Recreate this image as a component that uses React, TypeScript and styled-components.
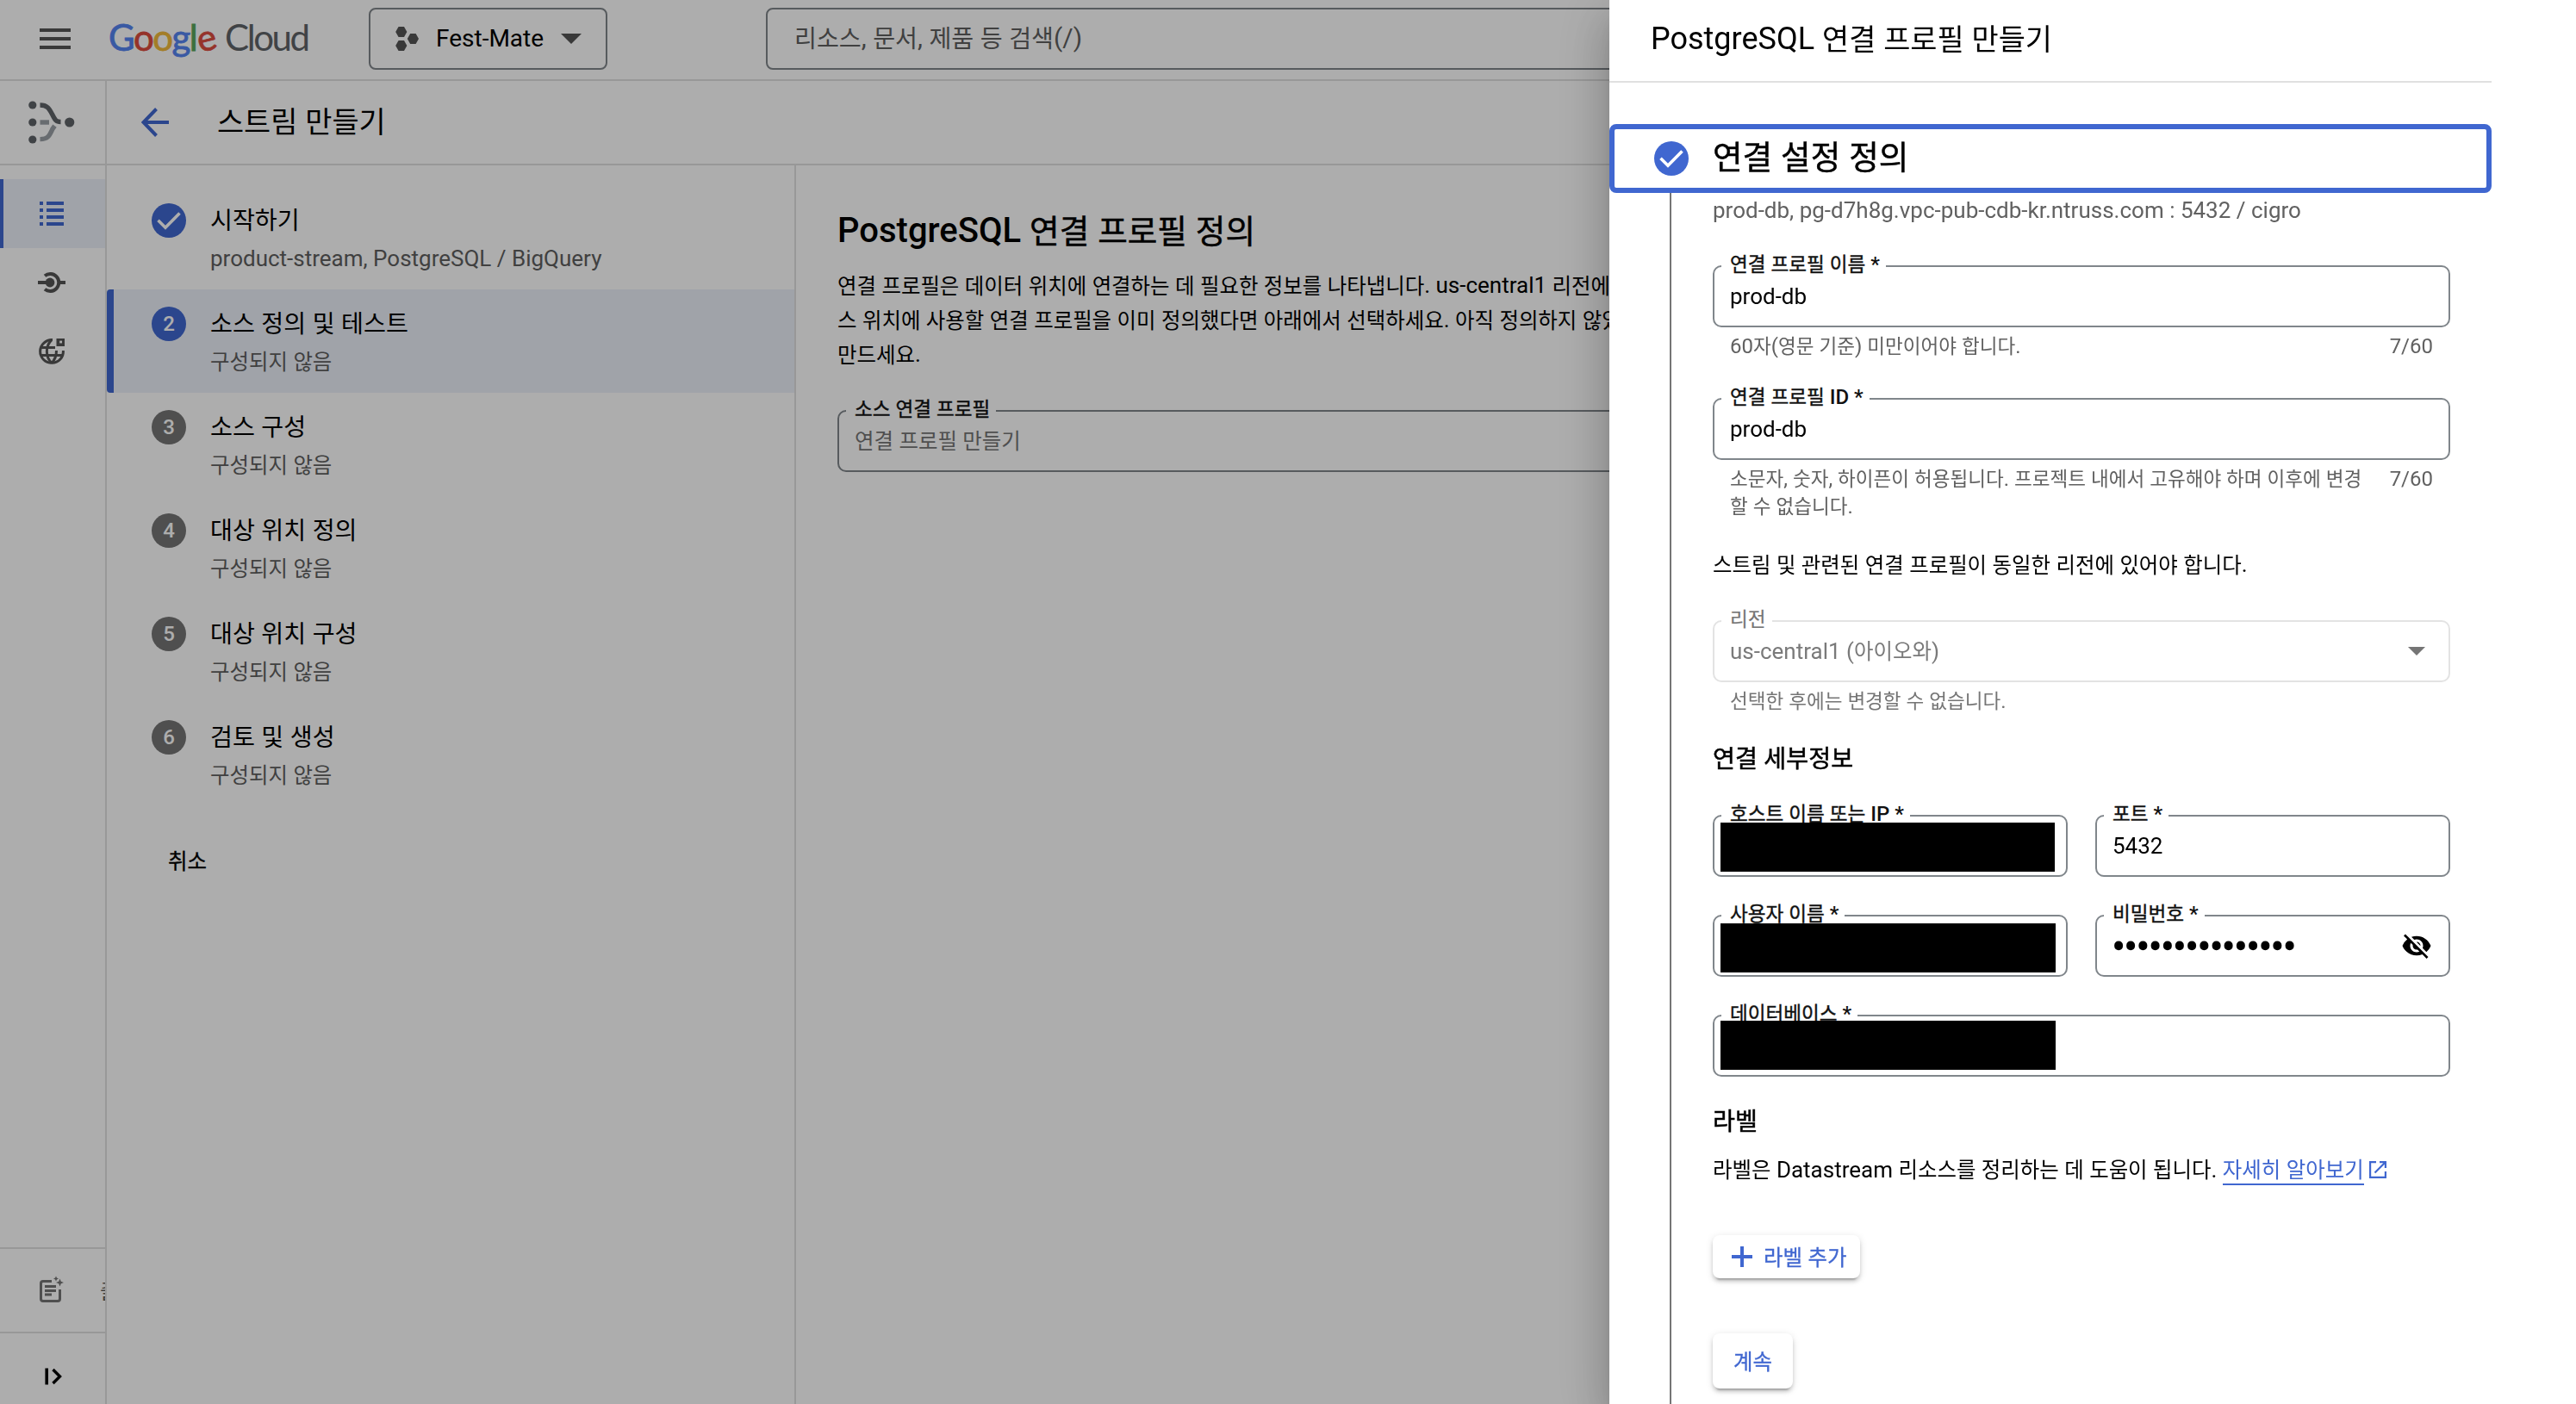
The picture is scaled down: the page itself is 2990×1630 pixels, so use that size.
import React from "react";
import styled, { createGlobalStyle } from "styled-components";
import { MdVisibilityOff } from "react-icons/md";

const BLUE = "#4067d0";
const LINE = "#e0e0e0";
const OUTLINE = "#80868b";

const GlobalStyle = createGlobalStyle`
  * { box-sizing: border-box; }
  html, body { margin: 0; padding: 0; background: #fff; overflow: hidden; }
  body {
    font-family: Roboto, "Noto Sans CJK KR", sans-serif;
    font-size: 26px;
    color: #000;
  }
  svg { display: block; flex: none; }
  h1, h2, h3, p { margin: 0; }
`;

/* Hangul is set a little smaller than the Latin text beside it; emphasised
   parents thicken it with --hangul-stroke instead of a heavier face. */
const Hangul = styled.span`
  font-size: 0.94em;
  font-weight: 400;
  line-height: 0;
  vertical-align: var(--hangul-drop, -0.03em);
  -webkit-text-stroke: var(--hangul-stroke, 0);
`;

function T({ children }: { children: string }) {
  return (
    <>
      {children.split(/([\uAC00-\uD7A3]+)/).map((part, i) =>
        i % 2 ? <Hangul key={i}>{part}</Hangul> : part
      )}
    </>
  );
}

/* ---------- shell ---------- */

const Page = styled.div`
  width: 2990px;
  height: 1630px;
  display: flex;
  flex-direction: column;
  overflow: hidden;
`;

const TopBar = styled.header`
  height: 94px;
  flex: none;
  display: flex;
  align-items: flex-start;
  border-bottom: 2px solid ${LINE};
`;

const MenuButton = styled.div`
  padding: 33px 0 0 46px;
  width: 126px;
  display: flex;
  flex-direction: column;
  gap: 6px;
`;

const MenuBar = styled.span`
  width: 36px;
  height: 4px;
  background: #555;
`;

const Logo = styled.div`
  width: 302px;
  padding-top: 17px;
  font: 400 42px/52px Lato, sans-serif;
  white-space: nowrap;
  display: flex;
  gap: 9px;
`;

const LogoWord = styled.span<{ $width: number; $spacing: number }>`
  width: ${(p) => p.$width}px;
  letter-spacing: ${(p) => p.$spacing}px;
  color: #5f6368;
`;

const Letter = styled.span<{ $color: string; $tilt?: boolean }>`
  display: inline-block;
  color: ${(p) => p.$color};
  -webkit-text-stroke: 0.8px ${(p) => p.$color};
  transform: ${(p) => (p.$tilt ? "rotate(-14deg)" : "none")};
`;

const ProjectPicker = styled.div`
  margin-top: 9px;
  width: 277px;
  height: 72px;
  border: 2px solid ${OUTLINE};
  border-radius: 8px;
  display: flex;
  align-items: center;
  padding: 0 28px 0 29px;
  font-size: 28px;
`;

const ProjectName = styled.span`
  margin-left: 19px;
  flex: 1;
  line-height: 40px;
`;

const Search = styled.div`
  margin: 9px 0 0 184px;
  flex: 1;
  height: 72px;
  border: 2px solid ${OUTLINE};
  border-radius: 8px;
  padding-left: 31px;
  font-size: 30px;
  line-height: 66px;
  color: #5f5f5f;
`;

const Body = styled.div`
  flex: 1;
  display: flex;
  min-height: 0;
`;

const Rail = styled.nav`
  width: 124px;
  flex: none;
  border-right: 2px solid ${LINE};
  display: flex;
  flex-direction: column;
`;

const RailProduct = styled.div`
  height: 98px;
  flex: none;
  border-bottom: 2px solid ${LINE};
  padding: 23px 0 0 33px;
  margin-bottom: 16px;
`;

const RailItem = styled.div<{ $active?: boolean }>`
  height: 80px;
  flex: none;
  display: flex;
  align-items: center;
  padding-left: 40px;
  background: ${(p) => (p.$active ? "#ecf1fa" : "transparent")};
  box-shadow: ${(p) => (p.$active ? `inset 4px 0 0 ${BLUE}` : "none")};
`;

const RailFooter = styled.div`
  margin-top: auto;
`;

const RailNotes = styled.div`
  height: 98px;
  border-top: 2px solid ${LINE};
  display: flex;
  align-items: center;
  padding-left: 40px;
  overflow: hidden;
  white-space: nowrap;
  color: #5f5f5f;
`;

const RailExpand = styled.div`
  height: 84px;
  border-top: 2px solid ${LINE};
  padding: 31px 0 0 40px;
`;

const RailFooterText = styled.span`
  margin-left: 36px;
  line-height: 40px;
`;

const Content = styled.main`
  flex: 1;
  min-width: 0;
  display: flex;
  flex-direction: column;
`;

const ContentHeader = styled.div`
  height: 98px;
  flex: none;
  border-bottom: 2px solid ${LINE};
  display: flex;
  align-items: center;
  padding-left: 40px;
`;

const PageTitle = styled.h1`
  margin-left: 55px;
  font-size: 36px;
  line-height: 48px;
  font-weight: 400;
  padding-bottom: 2px;
`;

const Columns = styled.div`
  flex: 1;
  display: flex;
`;

/* ---------- stepper ---------- */

const Steps = styled.div`
  width: 800px;
  flex: none;
  border-right: 2px solid ${LINE};
  padding-top: 24px;
`;

const Step = styled.div<{ $active?: boolean }>`
  height: 120px;
  display: flex;
  padding: 20px 0 0 ${(p) => (p.$active ? 44 : 52)}px;
  border-left: ${(p) => (p.$active ? `8px solid ${BLUE}` : "none")};
  border-radius: 4px 0 0 4px;
  background: ${(p) => (p.$active ? "#ecf1fa" : "transparent")};
`;

const Badge = styled.span<{ $on: boolean }>`
  width: 40px;
  height: 40px;
  flex: none;
  border-radius: 50%;
  background: ${(p) => (p.$on ? BLUE : "#757575")};
  color: #fff;
  font-size: 24px;
  font-weight: 500;
  line-height: 40px;
  text-align: center;
`;

const StepText = styled.div`
  margin-left: 28px;
  white-space: nowrap;
`;

const StepTitle = styled.div`
  font-size: 30px;
  line-height: 38px;
`;

const StepSub = styled.div`
  --hangul-drop: 0;
  margin-top: 8px;
  font-size: 26px;
  line-height: 36px;
  color: #5f5f5f;
`;

const CancelButton = styled.div`
  margin: 43px 0 0 71px;
  line-height: 40px;
  font-weight: 500;
  --hangul-stroke: 0.3px;
`;

/* ---------- main form ---------- */

const Main = styled.section`
  flex: 1;
  padding: 52px 0 0 48px;
  white-space: nowrap;
`;

const MainTitle = styled.h2`
  font-size: 40px;
  line-height: 48px;
  font-weight: 500;
  --hangul-stroke: 0.5px;
`;

const Paragraph = styled.p`
  margin: 19px 0 45px;
  line-height: 40px;
`;

/* ---------- fields ---------- */

type Tone = "normal" | "muted" | "disabled";

const FieldBox = styled.div<{ $tone: Tone }>`
  --hangul-drop: 0;
  position: relative;
  height: 72px;
  border: 2px solid ${(p) => (p.$tone === "disabled" ? "#e3e3e3" : OUTLINE)};
  border-radius: 10px;
  padding: 0 18px;
  display: flex;
  align-items: center;
  justify-content: space-between;
  line-height: 40px;
  color: ${(p) =>
    p.$tone === "normal" ? "#000" : p.$tone === "muted" ? "#757575" : "#7a7a7a"};
`;

const FieldLabel = styled.span<{ $tone: Tone }>`
  position: absolute;
  left: 8px;
  top: -18px;
  padding: 0 7px 0 10px;
  font-size: 24px;
  line-height: 30px;
  font-weight: ${(p) => (p.$tone === "disabled" ? 400 : 500)};
  --hangul-stroke: ${(p) => (p.$tone === "disabled" ? "0.2px" : "0.4px")};
  background: #fff;
  color: ${(p) => (p.$tone === "disabled" ? "#757575" : "#111")};
  white-space: nowrap;
`;

const Hint = styled.div<{ $tone?: Tone }>`
  --hangul-drop: 0;
  padding: 6px 20px 0;
  display: flex;
  justify-content: space-between;
  font-size: 24px;
  line-height: 32px;
  color: ${(p) => (p.$tone === "disabled" ? "#757575" : "#616161")};
  white-space: pre;
`;

const Redaction = styled.span<{ $top: number; $width: number }>`
  position: absolute;
  left: 6.5px;
  top: ${(p) => p.$top}px;
  width: ${(p) => p.$width}px;
  height: 57px;
  background: #000;
`;

const PasswordDots = styled.span`
  display: flex;
  padding-top: 1px;
`;

const Dot = styled.span`
  width: 14.2px;
  font-size: 38px;
  line-height: 40px;
  -webkit-text-stroke: 2.4px #000;
  display: flex;
  justify-content: center;
`;

const Trailing = styled.span<{ $inset: number }>`
  margin-right: ${(p) => p.$inset}px;
`;

interface FieldProps {
  label: string;
  value?: string;
  tone?: Tone;
  cover?: { top: number; width: number };
  children?: React.ReactNode;
}

function Field({ label, value, tone = "normal", cover, children }: FieldProps) {
  return (
    <FieldBox $tone={tone}>
      <FieldLabel $tone={tone}>
        <T>{label}</T>
      </FieldLabel>
      {value && (
        <span>
          <T>{value}</T>
        </span>
      )}
      {cover && <Redaction $top={cover.top} $width={cover.width} />}
      {children}
    </FieldBox>
  );
}

/* ---------- side panel ---------- */

const Scrim = styled.div`
  position: fixed;
  inset: 0;
  background: rgba(0, 0, 0, 0.32);
`;

const Panel = styled.aside`
  position: fixed;
  top: 0;
  right: 0;
  bottom: 0;
  width: 1122px;
  padding-right: 98px;
  background: #fff;
  display: flex;
  flex-direction: column;
  box-shadow: 0 16px 20px -10px rgba(0, 0, 0, 0.2),
    0 32px 48px 4px rgba(0, 0, 0, 0.14), 0 12px 60px 10px rgba(0, 0, 0, 0.12);
`;

const PanelHeader = styled.div`
  height: 96px;
  flex: none;
  border-bottom: 2px solid ${LINE};
  padding-left: 48px;
  font-size: 36px;
  line-height: 90px;
`;

const FocusedStep = styled.div`
  margin-top: 48px;
  height: 80px;
  flex: none;
  border: 6px solid ${BLUE};
  border-radius: 8px;
  display: flex;
  align-items: center;
  padding-left: 46px;
`;

const FocusedTitle = styled.h2`
  margin-left: 28px;
  font-size: 40px;
  line-height: 48px;
  font-weight: 500;
  --hangul-stroke: 0.5px;
  padding-bottom: 4px;
`;

const StepBody = styled.div`
  flex: 1;
  min-height: 0;
  margin-left: 70px;
  border-left: 2px solid #757575;
  padding: 0 48px 0 48px;
  display: flex;
  flex-direction: column;
`;

const Summary = styled.p`
  padding-top: 2px;
  line-height: 36px;
  color: #616161;
  margin-bottom: 46px;
`;

const FieldBlock = styled.div<{ $height: number }>`
  height: ${(p) => p.$height}px;
  flex: none;
`;

const Note = styled.p`
  height: 84px;
  flex: none;
  padding-top: 1px;
  line-height: 36px;
  white-space: nowrap;
`;

const SectionTitle = styled.h3<{ $height: number; $top: number }>`
  height: ${(p) => p.$height}px;
  padding-top: ${(p) => p.$top}px;
  flex: none;
  font-size: 30px;
  line-height: 40px;
  font-weight: 500;
  --hangul-stroke: 0.5px;
`;

const FieldGrid = styled.div`
  display: grid;
  grid-template-columns: 412px 412px;
  column-gap: 32px;
  row-gap: 44px;
`;

const WideCell = styled.div`
  grid-column: 1 / -1;
`;

const LabelRow = styled.div`
  --hangul-drop: 0;
  display: flex;
  align-items: center;
  height: 36px;
  line-height: 36px;
  flex: none;
  white-space: pre;
`;

const Link = styled.a`
  color: ${BLUE};
  height: 36px;
  border-bottom: 2px solid ${BLUE};
`;

const LinkIcon = styled.span`
  margin-left: 5px;
`;

const Raised = styled.button<{ $top: number; $height: number; $pad: string }>`
  margin: ${(p) => p.$top}px 0 0;
  height: ${(p) => p.$height}px;
  flex: none;
  align-self: flex-start;
  display: flex;
  align-items: center;
  gap: 13px;
  padding: ${(p) => p.$pad};
  border: 0;
  border-radius: 8px;
  background: #fff;
  color: ${BLUE};
  font: 500 26px/40px Roboto, "Noto Sans CJK KR", sans-serif;
  --hangul-stroke: 0.3px;
  box-shadow: 0 6px 2px -4px rgba(0, 0, 0, 0.2), 0 4px 4px rgba(0, 0, 0, 0.14),
    0 2px 10px rgba(0, 0, 0, 0.12);
`;

/* ---------- icons ---------- */

const CheckBadge = () => (
  <svg width="40" height="40" viewBox="0 0 40 40">
    <circle cx="20" cy="20" r="20" fill={BLUE} />
    <path d="M7.5 19.8 16 28.2 32.5 11.6" fill="none" stroke="#fff" strokeWidth="3.6" />
  </svg>
);

const HexIcon = () => (
  <svg width="28" height="30" viewBox="0 0 28 30" fill="#555">
    <path d="M3.6 1h6.4l3.4 6-3.4 6H3.6L.2 7z" />
    <path d="M17.2 9h6.4l3.4 6-3.4 6h-6.4l-3.4-6z" />
    <path d="M3.6 17h6.4l3.4 6-3.4 6H3.6L.2 23z" />
  </svg>
);

const Caret = ({ width, color }: { width: number; color: string }) => (
  <svg width={width} height={width / 2} viewBox="0 0 20 10" fill={color}>
    <path d="M0 0h20L10 10z" />
  </svg>
);

const DatastreamIcon = () => (
  <svg width="54" height="50" viewBox="0 0 54 50">
    <g fill="#5f6368">
      <circle cx="4.8" cy="5" r="4.6" />
      <circle cx="4.8" cy="25" r="4.6" />
      <circle cx="4.8" cy="45" r="4.6" />
      <circle cx="47.7" cy="25" r="5.6" />
    </g>
    <g fill="none" strokeWidth="5.4">
      <path d="M13.5 25H24" stroke="#9aa0a6" />
      <path d="M13.5 44.6c9 0 11-4 14.5-12l2.5-3.5" stroke="#9aa0a6" />
      <path d="M13.5 5c8.5 0 10.5 4 14 10.500C31 22.500 32 24.500 37.500 24.500" stroke="#5f6368" />
    </g>
  </svg>
);

const ListIcon = () => (
  <svg width="40" height="40" viewBox="0 0 40 40" fill={BLUE}>
    {[6, 14, 22, 30].map((y) => (
      <React.Fragment key={y}>
        <rect x="6" y={y} width="4" height="4" />
        <rect x="14" y={y} width="20" height="4" />
      </React.Fragment>
    ))}
  </svg>
);

const ConnectionIcon = () => (
  <svg width="40" height="40" viewBox="0 0 40 40">
    <circle cx="18" cy="20" r="5.4" fill="#555" />
    <path d="M4 20h10M27 20h9" stroke="#555" strokeWidth="4" />
    <path d="M12 12.2A10 10 0 1 1 12 27.8" fill="none" stroke="#555" strokeWidth="4" />
  </svg>
);

const GlobeIcon = () => (
  <svg width="40" height="40" viewBox="0 0 40 40" fill="none" stroke="#555" strokeWidth="3">
    <path d="M21 6.6A13.4 13.4 0 1 0 33.4 19" />
    <path d="M20 6.6c-7.5 7-7.5 20 0 26.800M20 33.400c4-4 5.500-9 5.500-14.400M7.500 15.500H24M7.500 24.500h25" />
    <rect x="25.5" y="5" width="9.5" height="9" fill="#555" stroke="none" />
    <rect x="29.2" y="7.6" width="2.8" height="2.8" fill="#fff" stroke="none" />
  </svg>
);

const NotesIcon = () => (
  <svg width="40" height="40" viewBox="0 0 40 40">
    <path
      d="M20 9.5H10a2.500 2.500 0 0 0-2.500 2.500v18a2.500 2.500 0 0 0 2.500 2.500h17a2.500 2.500 0 0 0 2.500-2.500V19"
      fill="none"
      stroke="#757575"
      strokeWidth="3"
    />
    <path d="M12 15.500h13M12 20.500h13M12 25h8" stroke="#757575" strokeWidth="3" />
    <path
      d="M29.500 6.500l1.300 3.200 3.200 1.300-3.200 1.300-1.300 3.200-1.300-3.200L25 11l3.200-1.300zM25 3.500l.9 2.100 2.100.9-2.100.9L25 9.500l-.9-2.100L22 6.500l2.100-.9z"
      fill="#757575"
    />
  </svg>
);

const ExpandIcon = () => (
  <svg width="40" height="40" viewBox="0 0 40 40" fill="none" stroke="#000">
    <path d="M14.2 9.5v19" strokeWidth="3.6" />
    <path d="M21.5 11l8 8-8 8" strokeWidth="3.4" />
  </svg>
);

const BackIcon = () => (
  <svg width="33" height="34" viewBox="0 0 33 34" fill="none" stroke={BLUE} strokeWidth="4">
    <path d="M32 17H3M17.5 1.5 2.5 17l15 15.5" />
  </svg>
);

const ExternalIcon = () => (
  <svg width="22" height="22" viewBox="0 0 22 22" fill="none" stroke={BLUE} strokeWidth="2.2">
    <path d="M9 2.1H2.1v17.8h17.8V13M13 2.1h6.9V9M19.5 2.5 7.5 14.5" />
  </svg>
);

const PlusIcon = () => (
  <svg width="24" height="24" viewBox="0 0 24 24" stroke={BLUE} strokeWidth="4">
    <path d="M12 0v24M0 12h24" />
  </svg>
);

/* ---------- data ---------- */

const STEPS = [
  { title: "시작하기", sub: "product-stream, PostgreSQL / BigQuery", done: true },
  { title: "소스 정의 및 테스트", sub: "구성되지 않음", active: true },
  { title: "소스 구성", sub: "구성되지 않음" },
  { title: "대상 위치 정의", sub: "구성되지 않음" },
  { title: "대상 위치 구성", sub: "구성되지 않음" },
  { title: "검토 및 생성", sub: "구성되지 않음" },
];

const INTRO = [
  "연결 프로필은 데이터 위치에 연결하는 데 필요한 정보를 나타냅니다. us-central1 리전에",
  "스 위치에 사용할 연결 프로필을 이미 정의했다면 아래에서 선택하세요. 아직 정의하지 않았",
  "만드세요.",
];

const GOOGLE: [string, string, boolean?][] = [
  ["G", "#5584f0"],
  ["o", "#dc4c3f"],
  ["o", "#f0b93a"],
  ["g", "#5584f0"],
  ["l", "#58a55c"],
  ["e", "#dc4c3f", true],
];

export default function App() {
  return (
    <>
      <GlobalStyle />
      <Page>
        <TopBar>
          <MenuButton>
            <MenuBar />
            <MenuBar />
            <MenuBar />
          </MenuButton>
          <Logo>
            <LogoWord $width={126} $spacing={-1.6}>
              {GOOGLE.map(([c, color, tilt], i) => (
                <Letter key={i} $color={color} $tilt={tilt}>
                  {c}
                </Letter>
              ))}
            </LogoWord>
            <LogoWord $width={98} $spacing={-2.4}>
              Cloud
            </LogoWord>
          </Logo>
          <ProjectPicker>
            <HexIcon />
            <ProjectName>Fest-Mate</ProjectName>
            <Caret width={24} color="#555" />
          </ProjectPicker>
          <Search>
            <T>리소스, 문서, 제품 등 검색(/)</T>
          </Search>
        </TopBar>
        <Body>
          <Rail>
            <RailProduct>
              <DatastreamIcon />
            </RailProduct>
            <RailItem $active>
              <ListIcon />
            </RailItem>
            <RailItem>
              <ConnectionIcon />
            </RailItem>
            <RailItem>
              <GlobeIcon />
            </RailItem>
            <RailFooter>
              <RailNotes>
                <NotesIcon />
                <RailFooterText>
                  <T>출</T>
                </RailFooterText>
              </RailNotes>
              <RailExpand>
                <ExpandIcon />
              </RailExpand>
            </RailFooter>
          </Rail>
          <Content>
            <ContentHeader>
              <BackIcon />
              <PageTitle>
                <T>스트림 만들기</T>
              </PageTitle>
            </ContentHeader>
            <Columns>
              <Steps>
                {STEPS.map((s, i) => (
                  <Step key={s.title} $active={s.active}>
                    {s.done ? <CheckBadge /> : <Badge $on={!!s.active}>{i + 1}</Badge>}
                    <StepText>
                      <StepTitle>
                        <T>{s.title}</T>
                      </StepTitle>
                      <StepSub>
                        <T>{s.sub}</T>
                      </StepSub>
                    </StepText>
                  </Step>
                ))}
                <CancelButton>
                  <T>취소</T>
                </CancelButton>
              </Steps>
              <Main>
                <MainTitle>
                  <T>PostgreSQL 연결 프로필 정의</T>
                </MainTitle>
                <Paragraph>
                  {INTRO.map((line) => (
                    <React.Fragment key={line}>
                      <T>{line}</T>
                      <br />
                    </React.Fragment>
                  ))}
                </Paragraph>
                <Field label="소스 연결 프로필" value="연결 프로필 만들기" tone="muted" />
              </Main>
            </Columns>
          </Content>
        </Body>
      </Page>
      <Scrim />
      <Panel>
        <PanelHeader>
          <T>PostgreSQL 연결 프로필 만들기</T>
        </PanelHeader>
        <FocusedStep>
          <CheckBadge />
          <FocusedTitle>
            <T>연결 설정 정의</T>
          </FocusedTitle>
        </FocusedStep>
        <StepBody>
          <Summary>prod-db, pg-d7h8g.vpc-pub-cdb-kr.ntruss.com : 5432 / cigro</Summary>
          <FieldBlock $height={154}>
            <Field label="연결 프로필 이름 *" value="prod-db" />
            <Hint>
              <span>
                <T>60자(영문 기준) 미만이어야 합니다.</T>
              </span>
              <span>7/60</span>
            </Hint>
          </FieldBlock>
          <FieldBlock $height={174}>
            <Field label="연결 프로필 ID *" value="prod-db" />
            <Hint>
              <span>
                <T>{"소문자, 숫자, 하이픈이 허용됩니다. 프로젝트 내에서 고유해야 하며 이후에 변경\n할 수 없습니다."}</T>
              </span>
              <span>7/60</span>
            </Hint>
          </FieldBlock>
          <Note>
            <T>스트림 및 관련된 연결 프로필이 동일한 리전에 있어야 합니다.</T>
          </Note>
          <FieldBlock $height={139}>
            <Field label="리전" value="us-central1 (아이오와)" tone="disabled">
              <Trailing $inset={9}>
                <Caret width={20} color="#757575" />
              </Trailing>
            </Field>
            <Hint $tone="disabled">
              <span>
                <T>선택한 후에는 변경할 수 없습니다.</T>
              </span>
            </Hint>
          </FieldBlock>
          <SectionTitle $height={87} $top={1}>
            <T>연결 세부정보</T>
          </SectionTitle>
          <FieldGrid>
            <Field label="호스트 이름 또는 IP *" cover={{ top: 7, width: 388 }} />
            <Field label="포트 *" value="5432" />
            <Field label="사용자 이름 *" cover={{ top: 8, width: 389 }} />
            <Field label="비밀번호 *">
              <PasswordDots>
                {Array.from({ length: 15 }, (_, i) => (
                  <Dot key={i}>•</Dot>
                ))}
              </PasswordDots>
              <Trailing $inset={1}>
                <MdVisibilityOff size={36} color="#000" />
              </Trailing>
            </Field>
            <WideCell>
              <Field label="데이터베이스 *" cover={{ top: 5, width: 389 }} />
            </WideCell>
          </FieldGrid>
          <SectionTitle $height={90} $top={31}>
            <T>라벨</T>
          </SectionTitle>
          <LabelRow>
            <span>
              <T>{"라벨은 Datastream 리소스를 정리하는 데 도움이 됩니다. "}</T>
            </span>
            <Link>
              <T>자세히 알아보기</T>
            </Link>
            <LinkIcon>
              <ExternalIcon />
            </LinkIcon>
          </LabelRow>
          <Raised $top={58} $height={50} $pad="0 16px 0 22px">
            <PlusIcon />
            <span>
              <T>라벨 추가</T>
            </span>
          </Raised>
          <Raised $top={64} $height={64} $pad="0 24px">
            <span>
              <T>계속</T>
            </span>
          </Raised>
        </StepBody>
      </Panel>
    </>
  );
}
